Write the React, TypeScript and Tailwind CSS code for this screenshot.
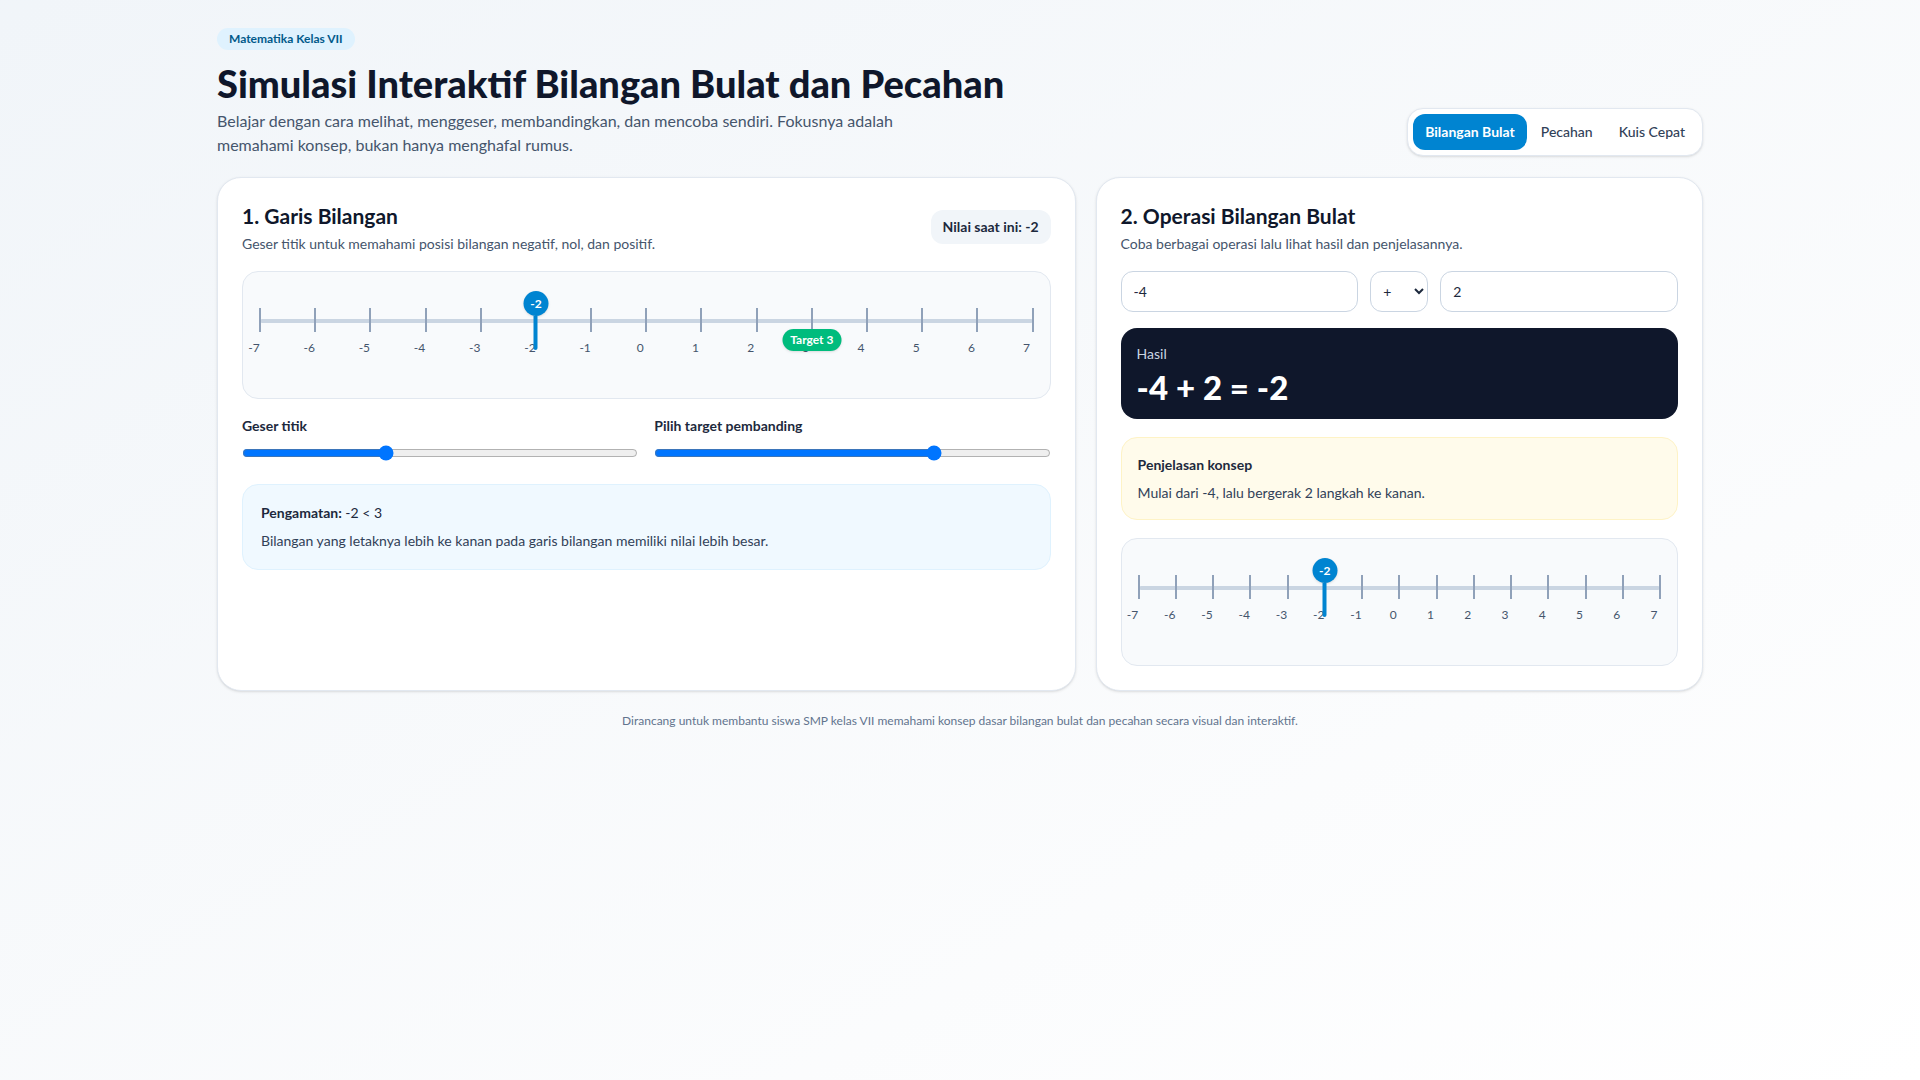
import { useState } from "react";

const TICKS = Array.from({ length: 15 }, (_, i) => i - 7);

function pos(v: number) {
  return ((v + 7) / 14) * 100;
}

function NumberLine({ value, target }: { value: number; target?: number }) {
  return (
    <div className="h-[128px] rounded-2xl border border-slate-200 bg-slate-50 px-[17px]">
      <div className="relative h-full">
        {/* main line */}
        <div className="absolute left-0 right-0 top-[47px] h-[4px] rounded bg-slate-300" />
        {TICKS.map((t) => (
          <div key={t}>
            <div
              className="absolute top-[36px] h-[24px] w-[2px] -translate-x-1/2 bg-slate-400"
              style={{ left: `${pos(t)}%` }}
            />
            <div
              className="absolute top-[68px] -translate-x-1/2 text-xs text-slate-600"
              style={{ left: `calc(${pos(t)}% - 6px)` }}
            >
              {t}
            </div>
          </div>
        ))}
        {target !== undefined && (
          <div
            className="absolute top-[57px] flex h-[22px] w-[59px] -translate-x-1/2 items-center justify-center rounded-full bg-emerald-500 text-xs font-bold text-white shadow-sm"
            style={{ left: `${pos(target)}%` }}
          >
            Target {target}
          </div>
        )}
        <div className="absolute top-[19px] -translate-x-1/2" style={{ left: `${pos(value)}%` }}>
          <div className="flex flex-col items-center">
            <div className="flex h-[25px] w-[25px] items-center justify-center rounded-full bg-sky-600 text-xs font-bold text-white shadow">
              {value}
            </div>
            <div className="h-[34px] w-[4px] rounded-b bg-sky-600" />
          </div>
        </div>
      </div>
    </div>
  );
}

export default function App() {
  const [point, setPoint] = useState(-2);
  const [target, setTarget] = useState(3);
  const [a, setA] = useState("-4");
  const [op, setOp] = useState("+");
  const [b, setB] = useState("2");
  const [tab, setTab] = useState("Bilangan Bulat");

  const na = Number(a) || 0;
  const nb = Number(b) || 0;
  const result = op === "+" ? na + nb : op === "-" ? na - nb : op === "×" ? na * nb : nb !== 0 ? na / nb : 0;
  const cmp = point < target ? "<" : point > target ? ">" : "=";

  return (
    <div className="min-h-screen bg-gradient-to-br from-slate-100 via-slate-50 to-white font-['Lato','Noto_Sans',sans-serif] text-slate-900">
      <div className="mx-auto max-w-[1486px] pt-[25px] pb-10">
        <div className="flex items-end justify-between">
          <div>
            <span className="inline-flex h-[22px] items-center rounded-full bg-sky-100 px-3 text-xs font-bold text-sky-800">
              Matematika Kelas VII
            </span>
            <h1 className="mt-[12px] text-[38px] leading-[42px] font-black text-slate-900">
              Simulasi Interaktif Bilangan Bulat dan Pecahan
            </h1>
            <p className="mt-[5px] max-w-[720px] text-base leading-6 text-slate-600">
              Belajar dengan cara melihat, menggeser, membandingkan, dan mencoba sendiri. Fokusnya adalah
              memahami konsep, bukan hanya menghafal rumus.
            </p>
          </div>
          <div className="mb-[1px] flex gap-0.5 rounded-2xl border border-slate-200 bg-white p-[5px] shadow-sm">
            {["Bilangan Bulat", "Pecahan", "Kuis Cepat"].map((t) => (
              <button
                key={t}
                onClick={() => setTab(t)}
                className={
                  tab === t
                    ? "h-[36px] rounded-xl bg-sky-600 px-3 text-sm font-bold text-white"
                    : "h-[36px] rounded-xl px-3 text-sm font-medium text-slate-700"
                }
              >
                {t}
              </button>
            ))}
          </div>
        </div>

        <div className="mt-5 grid grid-cols-[858fr_607fr] gap-5">
          {/* Left card */}
          <div className="rounded-3xl border border-slate-200 bg-white p-6 shadow-sm">
            <div className="flex items-start justify-between">
              <div>
                <h2 className="text-[21px] leading-7 font-bold">1. Garis Bilangan</h2>
                <p className="mt-1 text-sm text-slate-600">
                  Geser titik untuk memahami posisi bilangan negatif, nol, dan positif.
                </p>
              </div>
              <div className="mt-[8px] flex h-[34px] items-center rounded-xl bg-slate-100 px-3 text-sm font-bold text-slate-800">
                Nilai saat ini: {point}
              </div>
            </div>
            <div className="mt-[17px]">
              <NumberLine value={point} target={target} />
            </div>
            <div className="mt-[14px] grid grid-cols-2 gap-4">
              <label className="block">
                <span className="text-sm font-bold text-slate-800">Geser titik</span>
                <input
                  type="range"
                  min={-7}
                  max={7}
                  value={point}
                  onChange={(e) => setPoint(Number(e.target.value))}
                  className="mt-2 block w-full"
                />
              </label>
              <label className="block">
                <span className="text-sm font-bold text-slate-800">Pilih target pembanding</span>
                <input
                  type="range"
                  min={-7}
                  max={7}
                  value={target}
                  onChange={(e) => setTarget(Number(e.target.value))}
                  className="mt-2 block w-full"
                />
              </label>
            </div>
            <div className="mt-[23px] rounded-2xl border border-sky-100 bg-sky-50 p-[18px]">
              <p className="text-sm text-slate-800">
                <span className="font-bold">Pengamatan:</span> {point} {cmp} {target}
              </p>
              <p className="mt-2 text-sm text-slate-700">
                Bilangan yang letaknya lebih ke kanan pada garis bilangan memiliki nilai lebih besar.
              </p>
            </div>
          </div>

          {/* Right card */}
          <div className="rounded-3xl border border-slate-200 bg-white p-6 shadow-sm">
            <h2 className="text-[21px] leading-7 font-bold">2. Operasi Bilangan Bulat</h2>
            <p className="mt-1 text-sm text-slate-600">Coba berbagai operasi lalu lihat hasil dan penjelasannya.</p>
            <div className="mt-[17px] grid grid-cols-[1fr_58px_1fr] gap-3">
              <input
                value={a}
                onChange={(e) => setA(e.target.value)}
                className="h-[41px] rounded-xl border border-slate-300 bg-white px-3 text-sm text-slate-800"
              />
              <select
                value={op}
                onChange={(e) => setOp(e.target.value)}
                className="h-[41px] rounded-xl border border-slate-300 bg-white px-2 text-sm text-slate-800"
              >
                <option>+</option>
                <option>-</option>
                <option>×</option>
                <option>÷</option>
              </select>
              <input
                value={b}
                onChange={(e) => setB(e.target.value)}
                className="h-[41px] rounded-xl border border-slate-300 bg-white px-3 text-sm text-slate-800"
              />
            </div>
            <div className="mt-4 h-[91px] rounded-2xl bg-slate-900 px-4 pt-[16px]">
              <p className="text-sm text-slate-300">Hasil</p>
              <p className="mt-[5px] text-[33px] leading-9 font-black text-white">
                {na} {op} {nb} = {result}
              </p>
            </div>
            <div className="mt-[18px] h-[83px] rounded-2xl border border-amber-100 bg-amber-50 px-4 pt-[17px]">
              <p className="text-sm font-bold text-slate-800">Penjelasan konsep</p>
              <p className="mt-2 text-sm text-slate-700">
                Mulai dari {na}, lalu bergerak {Math.abs(nb)} langkah ke {nb >= 0 ? "kanan" : "kiri"}.
              </p>
            </div>
            <div className="mt-[18px]">
              <NumberLine value={Math.max(-7, Math.min(7, result))} />
            </div>
          </div>
        </div>

        <p className="mt-[22px] text-center text-xs text-slate-500">
          Dirancang untuk membantu siswa SMP kelas VII memahami konsep dasar bilangan bulat dan pecahan secara visual
          dan interaktif.
        </p>
      </div>
    </div>
  );
}
